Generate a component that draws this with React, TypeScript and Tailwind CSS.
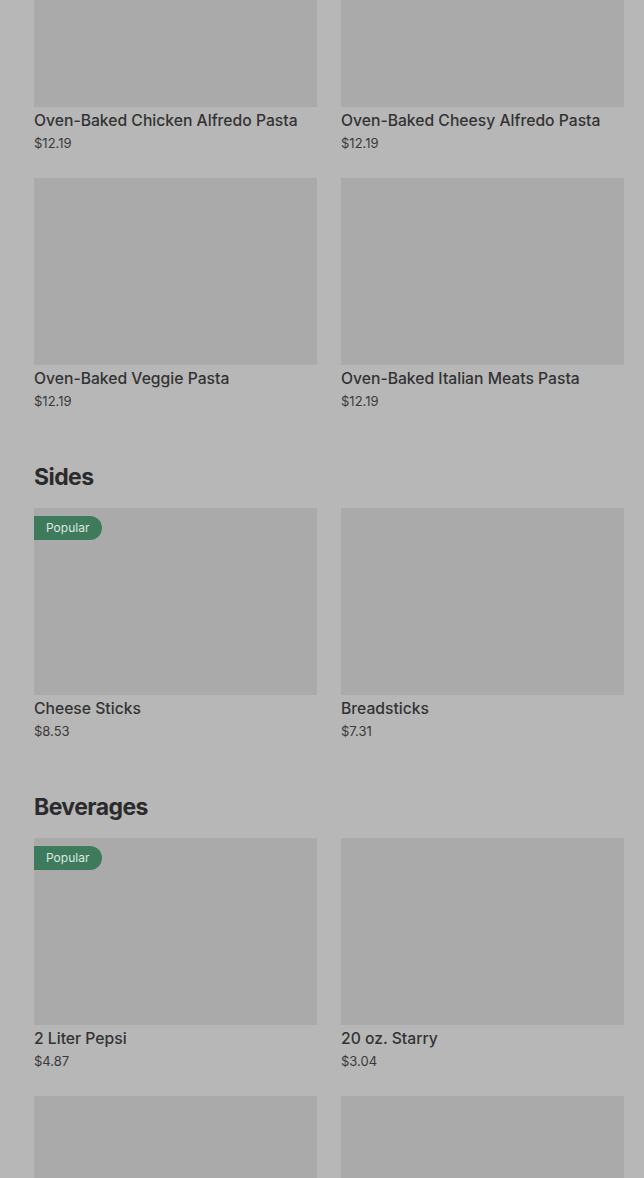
import React from "react";

type Item = { name: string; price: string; popular?: boolean };

const rows: { title?: string; items: Item[] }[] = [
  {
    items: [
      { name: "Oven-Baked Chicken Alfredo Pasta", price: "$12.19" },
      { name: "Oven-Baked Cheesy Alfredo Pasta", price: "$12.19" },
      { name: "Oven-Baked Veggie Pasta", price: "$12.19" },
      { name: "Oven-Baked Italian Meats Pasta", price: "$12.19" },
    ],
  },
  {
    title: "Sides",
    items: [
      { name: "Cheese Sticks", price: "$8.53", popular: true },
      { name: "Breadsticks", price: "$7.31" },
    ],
  },
  {
    title: "Beverages",
    items: [
      { name: "2 Liter Pepsi", price: "$4.87", popular: true },
      { name: "20 oz. Starry", price: "$3.04" },
      { name: "", price: "" },
      { name: "", price: "" },
    ],
  },
];

const MenuCard: React.FC<{ item: Item }> = ({ item }) => (
  <div className="flex flex-col">
    <div className="relative h-[187px] bg-[#aaaaaa]">
      {item.popular && (
        <span className="absolute left-0 top-2 h-6 pl-3 pr-[13px] flex items-center rounded-r-full bg-[#3e7b5c] text-[12px] text-[#dce8e1]">
          Popular
        </span>
      )}
    </div>
    <div className="text-[15.7px] leading-6 font-medium text-[#333333] mt-[2px]">
      {item.name}
    </div>
    <div className="text-[13px] leading-[21px] text-[#3a3a3a]">{item.price}</div>
  </div>
);

export default function App() {
  return (
    <div
      className="min-h-[1178px] bg-[#b7b7b7] overflow-hidden"
      style={{ fontFamily: "Inter, 'Noto Sans', sans-serif" }}
    >
      <div className="-mt-[80px] pl-[34px] pr-[20px]">
        {rows.map((section, i) => (
          <div key={i} className={section.title ? "mt-[49px]" : ""}>
            {section.title && (
              <h2 className="text-[23px] leading-8 font-bold tracking-tight text-[#2b2b2b] mb-[15px]">
                {section.title}
              </h2>
            )}
            <div className="grid grid-cols-2 gap-x-6 gap-y-6">
              {section.items.map((item, j) => (
                <MenuCard key={j} item={item} />
              ))}
            </div>
          </div>
        ))}
      </div>
    </div>
  );
}
